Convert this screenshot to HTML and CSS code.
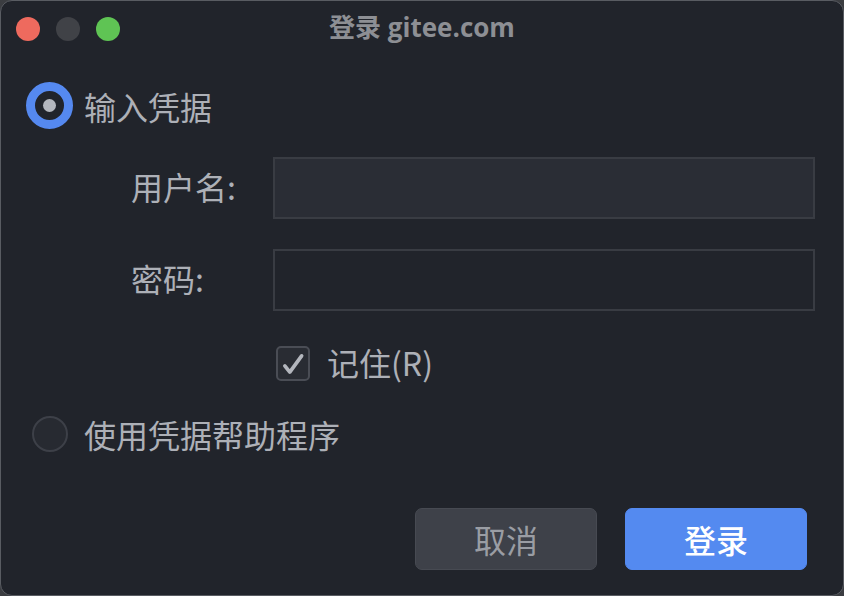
FILE: index.html
```html
<!DOCTYPE html>
<html lang="zh-CN">
<head>
<meta charset="utf-8">
<title>登录 gitee.com</title>
<link rel="stylesheet" href="styles.css">
</head>
<body>
<div class="window">
  <div class="titlebar">
    <div class="lights">
      <span class="light red"></span>
      <span class="light gray"></span>
      <span class="light green"></span>
    </div>
    <div class="title">登录 gitee.com</div>
    <div class="spacer"></div>
  </div>
  <div class="content">
    <div class="option">
      <span class="radio-box"><span class="radio checked"><span class="dot"></span></span></span>
      <span class="option-label">输入凭据</span>
    </div>
    <div class="form">
      <label class="field-label">用户名:</label>
      <div class="input filled"></div>
      <label class="field-label">密码:</label>
      <div class="input"></div>
      <div class="check-row">
        <span class="checkbox">
          <svg width="33" height="34" viewBox="0 0 33 34"><polyline points="7.5,19 13,26 26,8" fill="none" stroke="#b3b6bd" stroke-width="4" stroke-linecap="round" stroke-linejoin="round"/></svg>
        </span>
        <span class="check-label">记住(R)</span>
      </div>
    </div>
    <div class="option option-second">
      <span class="radio-box"><span class="radio"></span></span>
      <span class="option-label">使用凭据帮助程序</span>
    </div>
    <div class="buttons">
      <button class="btn cancel">取消</button>
      <button class="btn primary">登录</button>
    </div>
  </div>
</div>
</body>
</html>
```

FILE: styles.css
```css
* { box-sizing: border-box; }
html, body {
  margin: 0;
  padding: 0;
  width: 844px;
  height: 596px;
  background: #3b3d41;
  overflow: hidden;
}
body {
  font-family: "Noto Sans CJK SC", "Noto Sans", sans-serif;
}
.window {
  width: 844px;
  height: 596px;
  background: #21242b;
  border: 1px solid #595c62;
  border-radius: 12px;
  display: flex;
  flex-direction: column;
  overflow: hidden;
}
.titlebar {
  height: 55px;
  display: grid;
  grid-template-columns: 1fr auto 1fr;
  align-items: center;
}
.lights {
  display: flex;
  gap: 16px;
  padding-left: 15px;
  padding-top: 1px;
}
.light {
  width: 24px;
  height: 24px;
  border-radius: 50%;
  display: block;
}
.red { background: #ee6a5e; }
.gray { background: #404247; }
.green { background: #5fc454; }
.title {
  font-family: "Open Sans", "Noto Sans CJK SC", sans-serif;
  font-weight: 700;
  font-size: 26px;
  color: #8d8f94;
  line-height: 30px;
  margin-top: -3px;
}
.content {
  flex: 1;
  display: flex;
  flex-direction: column;
  padding: 26px 28px 25px 25px;
  color: #adb0b7;
  font-size: 32px;
}
.option {
  display: flex;
  align-items: center;
  gap: 11px;
  height: 47px;
}
.radio-box {
  width: 47px;
  height: 47px;
  display: flex;
  align-items: center;
  justify-content: center;
}
.radio {
  width: 36px;
  height: 36px;
  border-radius: 50%;
  border: 2px solid #3d4048;
  background: #272a31;
  display: flex;
  align-items: center;
  justify-content: center;
}
.radio.checked {
  width: 47px;
  height: 47px;
  border: 9px solid #5589f0;
  background: #21242b;
}
.dot {
  width: 13px;
  height: 13px;
  border-radius: 50%;
  background: #b4b7be;
}
.option-label {
  line-height: 40px;
}
.form {
  margin-top: 28px;
  padding-left: 105px;
  display: grid;
  grid-template-columns: 142px 1fr;
  grid-auto-rows: 62px;
  row-gap: 30px;
  align-items: center;
}
.field-label {
  line-height: 40px;
  padding-bottom: 5px;
}
.input {
  height: 62px;
  border: 2px solid #393c43;
  background: #21242b;
}
.input.filled {
  background: #2a2d35;
}
.check-row {
  grid-column: 2;
  height: 35px;
  margin-top: 5px;
  align-self: start;
  display: flex;
  align-items: center;
  gap: 17px;
  padding-left: 3px;
}
.checkbox {
  width: 34px;
  height: 35px;
  border: 2px solid #4a4d55;
  border-radius: 5px;
  background: #292c33;
  display: flex;
  align-items: center;
  justify-content: center;
}
.checkbox svg { display: block; }
.check-label {
  line-height: 40px;
  padding-bottom: 3px;
}
.option-second {
  margin-top: 7px;
}
.buttons {
  margin-top: auto;
  margin-right: 8px;
  display: flex;
  justify-content: flex-end;
  gap: 28px;
}
.btn {
  width: 182px;
  height: 62px;
  border-radius: 7px;
  font-family: "Noto Sans CJK SC", sans-serif;
  font-size: 32px;
  line-height: 40px;
  padding: 0;
  display: flex;
  align-items: center;
  justify-content: center;
}
.cancel {
  background: #3e4149;
  border: 1px solid #474a52;
  color: #9a9da4;
}
.primary {
  background: #548af0;
  border: 1px solid #548af0;
  color: #ffffff;
  font-weight: 500;
}
```
